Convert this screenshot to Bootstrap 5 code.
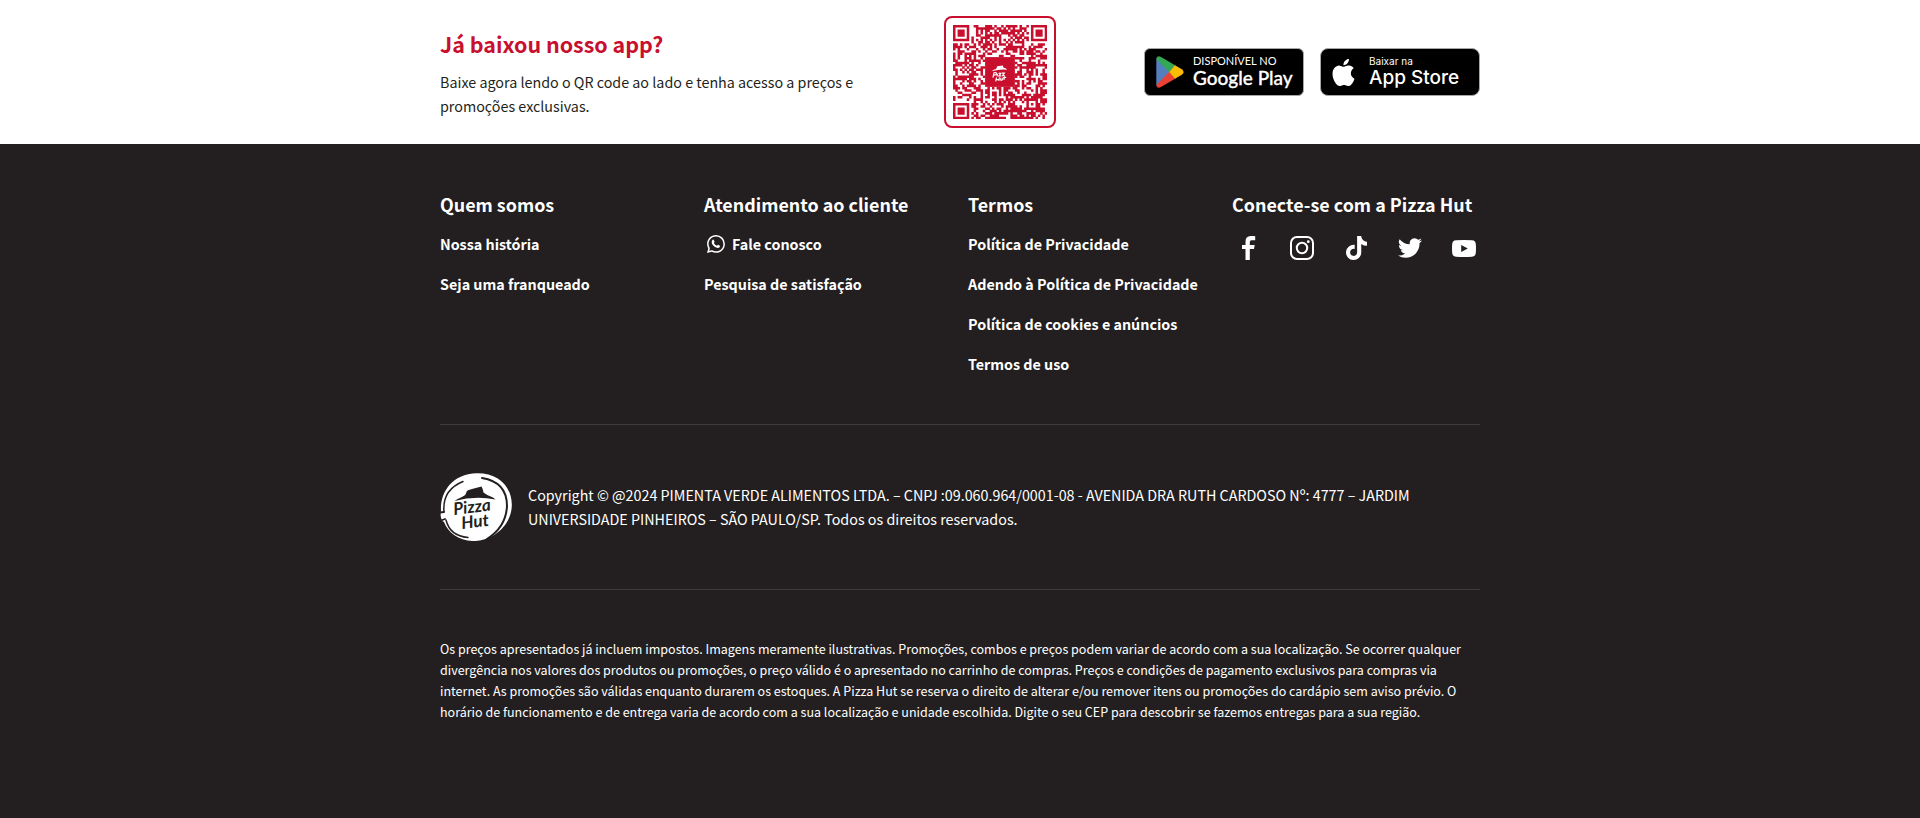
<!DOCTYPE html>
<html lang="pt-BR">
<head>
<meta charset="utf-8">
<meta name="viewport" content="width=device-width, initial-scale=1">
<title>Pizza Hut</title>
<link href="https://cdn.jsdelivr.net/npm/bootstrap@5.3.0/dist/css/bootstrap.min.css" rel="stylesheet">
<style>
:root{--brand:#c8102e;--ink:#231f20;--line:#3f3b3c}
body{font-family:"Source Sans Pro","Noto Sans CJK SC",sans-serif;font-size:16px;font-size-adjust:.486;line-height:24px;color:var(--ink);background:var(--ink)}
svg{display:block;flex:none}
.wrap{width:100%;max-width:1072px;margin:0 auto;padding:0 16px}
.app-copy{flex:0 1 40%;min-width:260px}
.app-title{font-size:24px;line-height:36px;color:var(--brand)}
.qr-box{border:2px solid var(--brand);border-radius:8px;padding:7px}
.store{display:flex;align-items:center;width:160px;height:48px;border:1px solid #a6a6a6;border-radius:6px;background:#000;color:#fff;text-decoration:none;white-space:nowrap;font-size-adjust:none;padding-left:11px}
.store span{display:block}
.store-play{font-family:Lato,sans-serif;gap:9px}
.store-play .top-line{font-size:11px;line-height:12px}
.store-play .name-line{font-size:19px;line-height:22px;font-weight:500;-webkit-text-stroke:.3px #fff}
.store-apple{font-family:Inter,sans-serif;gap:12px;padding-left:9px;border-radius:8px}
.store-apple .top-line{font-size:10px;line-height:12px}
.store-apple .name-line{font-size:19px;line-height:22px;font-weight:500}
.link-grid{display:grid;grid-template-columns:repeat(auto-fit,minmax(240px,1fr));gap:16px}
.foot h2{font-size:20px;line-height:24px}
.foot a{color:#fff;text-decoration:none;white-space:nowrap}
.foot a:hover{text-decoration:underline}
.social{width:32px;height:32px;display:flex;align-items:center;justify-content:center}
.rule{border-top:1px solid var(--line)}
.legal{font-size:14px;line-height:21px}
</style>
</head>
<body>
<section class="bg-white py-3">
  <div class="wrap d-flex flex-wrap align-items-center justify-content-between row-gap-3">
    <div class="app-copy">
      <h1 class="app-title fw-bold mb-2">Já baixou nosso app?</h1>
      <p class="mb-0">Baixe agora lendo o QR code ao lado e tenha acesso a preços e promoções exclusivas.</p>
    </div>
    <div class="qr-box">
      <svg id="qr" width="94" height="94" viewBox="0 0 41 41" fill="#c8102e" role="img" aria-label="QR code do aplicativo">
        <path id="qr-modules" d=""/>
        <path d="M14 14h13v13h-13z"/>
        <path fill="#fff" d="M16.800 20.200q1-.9 2-1l.5-1.200 2.400-.3.4 1q1 .1 1.500.8-3.300-.3-6.800.7z"/>
        <g fill="none" stroke="#fff" stroke-width=".5"><path d="M17.400 23l.5-2.200q1.400-.3.9.8l-1.200.4M19.200 22.400l.2-1.200M19.900 21.100h1l-.9 1.100h1M21.400 21h1l-.8 1.100h.9M18.600 24.600l.4-1.700M20 24.400l.3-1.600M18.700 23.800h1.400M20.900 23l-.1 1q.6.500 1-.8M22.200 23.900l.4-1.600M21.700 22.900h1.500"/></g>
      </svg>
    </div>
    <div class="d-flex flex-wrap gap-3">
      <a class="store store-play" href="#">
        <svg width="28" height="32" viewBox="0 0 28 32"><path fill="#557ebf" d="M.3 2.200V29.800L14 16z"/><path fill="#34a853" d="M.3 3Q.8-1.200 5 1L19.500 9.400 13.300 16.200z"/><path fill="#ea4335" d="M.3 29Q.8 33.200 5 31L19.500 22.600 13.300 15.800z"/><path fill="#fbbc04" d="M19 9.200 25.800 13.200Q29.400 16 25.800 18.800L19 22.800 13.200 16z"/></svg>
        <span><span class="top-line">DISPONÍVEL NO</span><span class="name-line">Google Play</span></span>
      </a>
      <a class="store store-apple" href="#">
        <svg width="27" height="27" viewBox="0 0 16 16" fill="#fff"><path d="M11.182.008C11.148-.03 9.923.023 8.857 1.180c-1.066 1.156-.902 2.482-.878 2.516.024.034 1.520.087 2.475-1.258.955-1.345.762-2.391.728-2.430zm3.314 11.733c-.048-.096-2.325-1.234-2.113-3.422.212-2.189 1.675-2.789 1.698-2.854.023-.065-.597-.79-1.254-1.157a3.692 3.692 0 0 0-1.563-.434c-.108-.003-.483-.095-1.254.116-.508.139-1.653.589-1.968.607-.316.018-1.256-.522-2.267-.665-.647-.125-1.333.131-1.824.328-.49.196-1.422.754-2.074 2.237-.652 1.482-.311 3.830-.067 4.560.244.729.625 1.924 1.273 2.796.576.984 1.340 1.667 1.659 1.899.319.232 1.219.386 1.843.067.502-.308 1.408-.485 1.766-.472.357.013 1.061.154 1.782.539.571.197 1.111.115 1.652-.105.541-.221 1.324-1.059 2.238-2.758.347-.79.505-1.217.473-1.282z"/></svg>
        <span><span class="top-line">Baixar na</span><span class="name-line">App Store</span></span>
      </a>
    </div>
  </div>
</section>

<footer class="foot text-white py-5">
  <div class="wrap">
    <div class="link-grid pb-5">
      <nav class="d-flex flex-column align-items-start gap-3" aria-label="Quem somos">
        <h2 class="fw-bold mb-0">Quem somos</h2>
        <a class="fw-bold" href="#">Nossa história</a>
        <a class="fw-bold" href="#">Seja uma franqueado</a>
      </nav>
      <nav class="d-flex flex-column align-items-start gap-3" aria-label="Atendimento ao cliente">
        <h2 class="fw-bold mb-0">Atendimento ao cliente</h2>
        <a class="fw-bold d-flex gap-1" href="#"><svg width="24" height="24" viewBox="0 0 24 24" fill="#fff"><g transform="translate(3 3) scale(1.125)"><path d="M13.601 2.326A7.854 7.854 0 0 0 7.994 0C3.627 0 .068 3.558.064 7.926c0 1.399.366 2.760 1.057 3.965L0 16l4.204-1.102a7.933 7.933 0 0 0 3.790.965h.004c4.368 0 7.926-3.558 7.930-7.930A7.898 7.898 0 0 0 13.600 2.326zM7.994 14.521a6.573 6.573 0 0 1-3.356-.92l-.24-.144-2.494.654.666-2.433-.156-.251a6.560 6.560 0 0 1-1.007-3.505c0-3.626 2.957-6.584 6.591-6.584a6.560 6.560 0 0 1 4.660 1.931 6.557 6.557 0 0 1 1.928 4.660c-.004 3.639-2.961 6.592-6.592 6.592z"/><path d="M5 4.300q.6-.5 1 .1l.7 1.600q0 .5-.6 1.100Q7 8.800 8.900 9.500q.5-.7.9-.8l1.700.9q.3 1.500-1.500 2Q7.800 12 5.300 9.200 3.200 6.200 5 4.300z"/></g></svg>Fale conosco</a>
        <a class="fw-bold" href="#">Pesquisa de satisfação</a>
      </nav>
      <nav class="d-flex flex-column align-items-start gap-3" aria-label="Termos">
        <h2 class="fw-bold mb-0">Termos</h2>
        <a class="fw-bold" href="#">Política de Privacidade</a>
        <a class="fw-bold" href="#">Adendo à Política de Privacidade</a>
        <a class="fw-bold" href="#">Política de cookies e anúncios</a>
        <a class="fw-bold" href="#">Termos de uso</a>
      </nav>
      <div class="d-flex flex-column gap-3">
        <h2 class="fw-bold mb-0">Conecte-se com a Pizza Hut</h2>
        <div class="d-flex justify-content-between">
          <a class="social" href="#" aria-label="Facebook"><svg width="15" height="24" viewBox="0 0 15 24" fill="#fff"><path d="M14.200 4.200V.2Q8.500-.7 6 1.300 4.400 2.800 4.500 6v3H1v4h3.500v11h4.300V13H13l.7-4H8.800V6.200q0-2 1.800-2z"/></svg></a>
          <a class="social" href="#" aria-label="Instagram"><svg width="24" height="24" viewBox="0 0 24 24" fill="none" stroke="#fff" stroke-width="2"><rect x="1" y="1" width="22" height="22" rx="6"/><circle cx="12" cy="12" r="5.200"/><circle cx="18.300" cy="5.700" r="1.400" fill="#fff" stroke="none"/></svg></a>
          <a class="social" href="#" aria-label="TikTok"><svg width="21" height="24" viewBox="0 0 448 512" fill="#fff"><path d="M448 209.910a210.060 210.060 0 0 1-122.770-39.250V349.380A162.550 162.550 0 1 1 185 188.310V278.200a74.620 74.620 0 1 0 52.230 71.180V0h88a121.180 121.180 0 0 0 1.860 22.170A122.180 122.180 0 0 0 381 102.390a121.430 121.430 0 0 0 67 20.140z"/></svg></a>
          <a class="social" href="#" aria-label="Twitter"><svg width="24" height="24" viewBox="0 0 16 16" fill="#fff"><path d="M5.026 14.500c6.038 0 9.341-5.003 9.341-9.334 0-.14 0-.282-.006-.422A6.685 6.685 0 0 0 16 3.042a6.658 6.658 0 0 1-1.889.518 3.301 3.301 0 0 0 1.447-1.817 6.533 6.533 0 0 1-2.087.793A3.286 3.286 0 0 0 7.875 5.530a9.325 9.325 0 0 1-6.767-3.429 3.289 3.289 0 0 0 1.018 4.382A3.323 3.323 0 0 1 .64 6.075v.045a3.288 3.288 0 0 0 2.632 3.218 3.203 3.203 0 0 1-.865.115 3.230 3.230 0 0 1-.614-.057 3.283 3.283 0 0 0 3.067 2.277A6.588 6.588 0 0 1 .78 13.080a6.320 6.320 0 0 1-.78-.045A9.344 9.344 0 0 0 5.026 14.500z"/></svg></a>
          <a class="social" href="#" aria-label="YouTube"><svg width="24" height="17" viewBox="0 0 24 17" fill="#fff"><path fill-rule="evenodd" d="M4 .3Q12-.3 20 .3 23.500.500 23.800 4 24.200 8.500 23.800 13 23.500 16.500 20 16.700 12 17.300 4 16.700.500 16.500.2 13-.2 8.500.2 4 .500.500 4 .3zM9.200 5v7l6.600-3.500z"/></svg></a>
        </div>
      </div>
    </div>

    <div class="rule py-5 d-flex align-items-center gap-3">
      <svg width="72" height="68" viewBox="0 0 72 68" role="img" aria-label="Pizza Hut">
        <path fill="#fff" d="M37 .2C56 0 71 11 71.800 31 72.300 50 56 67 35 68 20 68.500 8 60 4 49 1 48 0 42 1 38 0 20 11 1 37 .2z"/>
        <g fill="none" stroke="#231f20" stroke-linecap="round"><path stroke-width="1.500" d="M4 39Q2 17 23 8.500M28 64.500Q10 63 6 47"/><path stroke-width="2" d="M42 5Q67 9 67 33 66 54 47 66"/><path stroke-width="1.800" d="M0 39.500 4 39M1 47.500 5 46"/></g>
        <path fill="#231f20" d="M14.500 28C18 25.500 22 24.500 24.500 22.500 26.500 21 26 18 28 17.200L32 16 41.500 13.500Q43 16 43.500 19.500 47 22.500 53 24.500L55.500 26.500Q35 22.500 14.500 28z"/>
        <g fill="#231f20" font-family="Lato,sans-serif" font-weight="700" font-style="italic" font-size-adjust="none"><text font-size="18" transform="translate(14 42) rotate(-7)">Pizza</text><text font-size="18" transform="translate(22 56) rotate(-7)">Hut</text></g>
      </svg>
      <p class="mb-0">Copyright © @2024 PIMENTA VERDE ALIMENTOS LTDA. – CNPJ :09.060.964/0001-08 - AVENIDA DRA RUTH CARDOSO Nº: 4777 – JARDIM UNIVERSIDADE PINHEIROS – SÃO PAULO/SP. Todos os direitos reservados.</p>
    </div>

    <p class="legal rule pt-5 mb-0">Os preços apresentados já incluem impostos. Imagens meramente ilustrativas. Promoções, combos e preços podem variar de acordo com a sua localização. Se ocorrer qualquer divergência nos valores dos produtos ou promoções, o preço válido é o apresentado no carrinho de compras. Preços e condições de pagamento exclusivos para compras via internet. As promoções são válidas enquanto durarem os estoques. A Pizza Hut se reserva o direito de alterar e/ou remover itens ou promoções do cardápio sem aviso prévio. O horário de funcionamento e de entrega varia de acordo com a sua localização e unidade escolhida. Digite o seu CEP para descobrir se fazemos entregas para a sua região.</p>
  </div>
</footer>
<script>
// Fills the code: three finder squares, one alignment square, timing lines and data modules
(function () {
  const n = 41, squares = [[3, 3, 3], [37, 3, 3], [3, 37, 3], [34, 34, 2]];
  let seed = 20240, d = '';
  const rnd = () => (seed = (seed * 16807) % 2147483647) / 2147483647;
  for (let y = 0; y < n; y++) for (let x = 0; x < n; x++) {
    let on = rnd() < .57;
    if (x === 6) on = y % 2 === 0;
    if (y === 6) on = x % 2 === 0;
    for (const [cx, cy, r] of squares) {
      const k = Math.max(Math.abs(x - cx), Math.abs(y - cy));
      if (k <= r) on = k !== r - 1;
      else if (r === 3 && k === 4) on = false;
    }
    if (x > 13 && x < 27 && y > 13 && y < 27) on = false;
    if (on) d += `M${x} ${y}h1.100v1.100h-1.100z`;
  }
  document.getElementById('qr-modules').setAttribute('d', d);
})();
</script>
<script src="https://cdn.jsdelivr.net/npm/bootstrap@5.3.0/dist/js/bootstrap.bundle.min.js"></script>
</body>
</html>
